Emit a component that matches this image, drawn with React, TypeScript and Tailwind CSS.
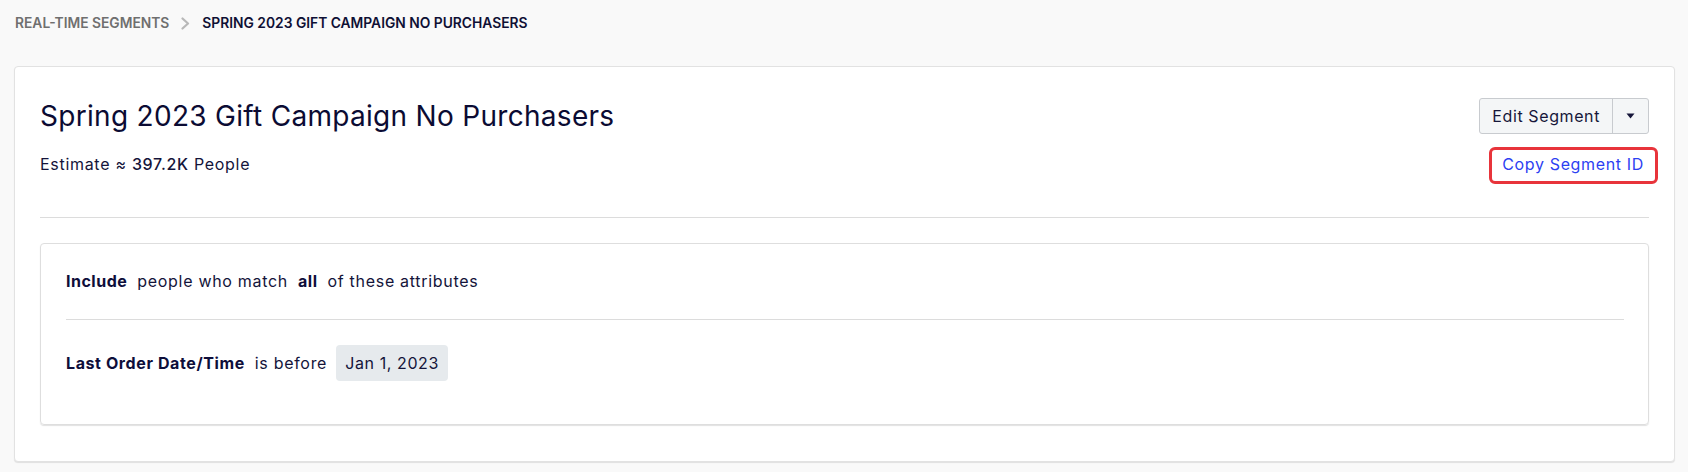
import React from 'react';

function ChevronIcon() {
  return (
    <svg width="9" height="13" viewBox="0 0 9 13" fill="none" className="shrink-0">
      <path d="M1.5 1.5L7 6.5L1.5 11.5" stroke="#b8b8b8" strokeWidth="2.2" strokeLinecap="round" strokeLinejoin="round" />
    </svg>
  );
}

function CaretDown() {
  return (
    <svg width="9" height="6" viewBox="0 0 9 6">
      <path d="M0.5 0.5h8L4.5 5.5z" fill="#16163a" />
    </svg>
  );
}

export default function App() {
  return (
    <div className="min-h-[472px] bg-[#f9f9f9] px-[14px] pr-[13px] pt-[13px] pb-[10px] font-['Inter','Noto_Sans',sans-serif] text-[#14143a]">
      {/* Breadcrumb */}
      <div className="flex items-center h-[20px] text-[13.8px] leading-[20px] font-semibold">
        <span className="text-[#6f6f6f] pl-[1px]">REAL-TIME SEGMENTS</span>
        <span className="ml-[12px] mr-[12px]">
          <ChevronIcon />
        </span>
        <span className="text-[#0f1035]">SPRING 2023 GIFT CAMPAIGN NO PURCHASERS</span>
      </div>

      {/* Segment card */}
      <div className="mt-[33px] bg-white border border-[#e2e2e2] rounded-[4px] shadow-[0_1px_1px_rgba(0,0,0,0.1)] px-[25px] pt-[31px] pb-[36px]">
        <div className="flex items-start justify-between">
          <div>
            <h1 className="text-[28px] leading-[36px] font-normal tracking-[0.3px] text-[#0b0b33]">
              Spring 2023 Gift Campaign No Purchasers
            </h1>
            <p className="mt-[18px] text-[16px] leading-[24px] tracking-[0.7px] text-[#14143a]">
              Estimate ≈ <span className="font-medium">397.2K</span> People
            </p>
          </div>

          <div className="flex flex-col items-end">
            <div className="flex h-[36px] rounded-[3px] border border-[#c8cbcf] bg-[#f4f6f7] text-[16px] tracking-[0.6px] text-[#16163a]">
              <button className="px-[12px] leading-[34px] tracking-[0.6px]">Edit Segment</button>
              <button className="w-[36px] border-l border-[#c8cbcf] flex items-center justify-center">
                <CaretDown />
              </button>
            </div>
            <div className="relative mt-[18px] mr-[5px]">
              <span className="text-[16px] leading-[24px] tracking-[0.65px] text-[#2d3ff2] cursor-pointer">Copy Segment ID</span>
              <span className="absolute -left-[13px] -right-[14px] -top-[5px] -bottom-[8px] border-[3px] border-[#e8343b] rounded-[6px] pointer-events-none" />
            </div>
          </div>
        </div>

        <div className="mt-[41px] border-t border-[#dcdcdc]" />

        {/* Criteria */}
        <div className="mt-[25px] border border-[#dedede] rounded-[4px] shadow-[0_1px_1px_rgba(0,0,0,0.12)] pl-[25px] pr-[24px] pt-[25px] pb-[43px] text-[16px] leading-[24px] tracking-[0.7px]">
          <div className="flex items-center gap-[10px]">
            <span className="font-bold tracking-[0.5px] text-[#0e0e3a]">Include</span>
            <span>people who match</span>
            <span className="font-bold tracking-[0.5px] text-[#0e0e3a]">all</span>
            <span>of these attributes</span>
          </div>

          <div className="mt-[26px] border-t border-[#dcdcdc]" />

          <div className="mt-[25px] flex items-center gap-[10px]">
            <span className="font-bold tracking-[0.6px] text-[#0e0e3a]">Last Order Date/Time</span>
            <span>is before</span>
            <span className="h-[36px] px-[9px] flex items-center rounded-[4px] bg-[#e6eaed] -ml-[1px] tracking-[0.6px]">Jan 1, 2023</span>
          </div>
        </div>
      </div>
    </div>
  );
}
